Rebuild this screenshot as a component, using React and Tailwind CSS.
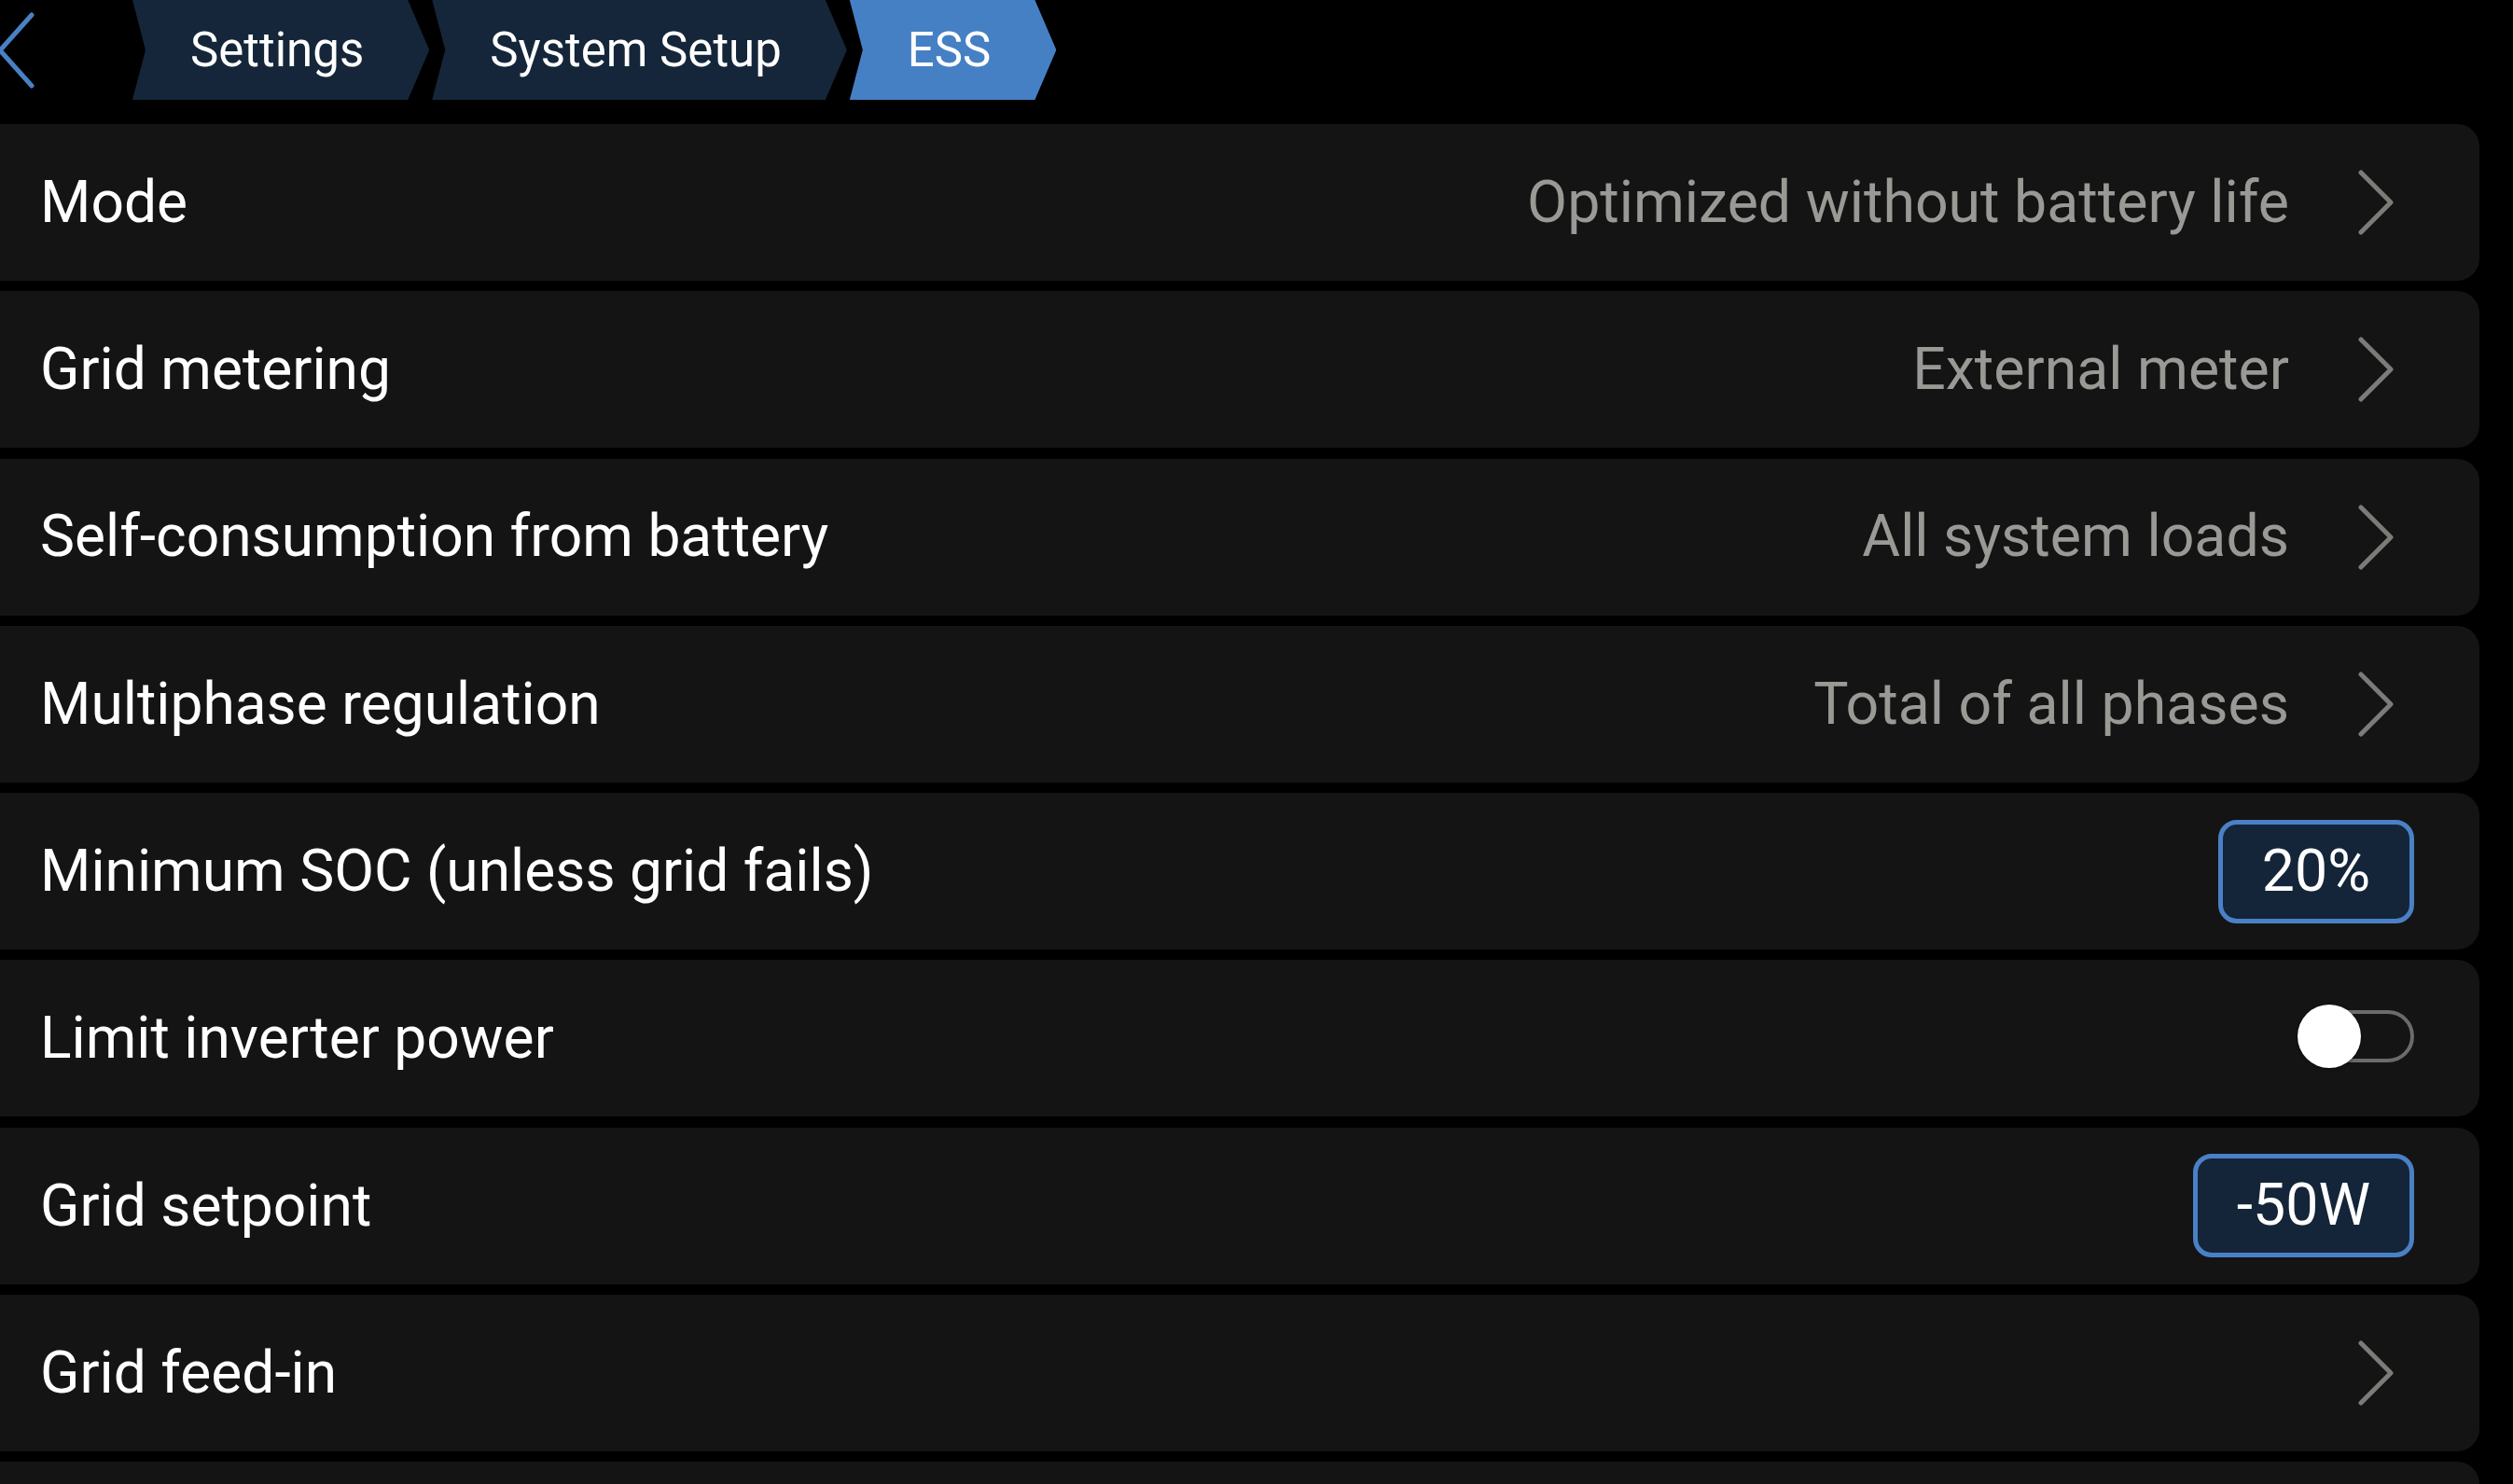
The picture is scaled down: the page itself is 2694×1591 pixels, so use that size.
import React, { useState } from "react";

const crumbs = [
  { name: "Settings", active: false },
  { name: "System Setup", active: false },
  { name: "ESS", active: true },
];

const rows = [
  { label: "Mode", value: "Optimized without battery life", kind: "link" },
  { label: "Grid metering", value: "External meter", kind: "link" },
  { label: "Self-consumption from battery", value: "All system loads", kind: "link" },
  { label: "Multiphase regulation", value: "Total of all phases", kind: "link" },
  { label: "Minimum SOC (unless grid fails)", value: "20%", kind: "box" },
  { label: "Limit inverter power", kind: "switch" },
  { label: "Grid setpoint", value: "-50W", kind: "box" },
  { label: "Grid feed-in", kind: "link" },
  { label: "", kind: "empty" },
];

const Chevron = () => (
  <svg width="38" height="70" viewBox="0 0 38 70" className="ml-[74px] mr-[22px] shrink-0">
    <polyline
      points="3,3 35,35 3,67"
      fill="none"
      stroke="#7b7b78"
      strokeWidth="5"
      strokeLinecap="round"
      strokeLinejoin="round"
    />
  </svg>
);

const Switch = () => {
  const [on, setOn] = useState(false);
  return (
    <button onClick={() => setOn(!on)} className="relative w-[125px] h-[68px] shrink-0 cursor-pointer mb-[5px]">
      <span
        className={
          "absolute right-0 top-[6px] w-[112px] h-[56px] rounded-full border-[4px] " +
          (on ? "border-[#4680c4] bg-[#4680c4]" : "border-[#6b6b69]")
        }
      />
      <span
        className={
          "absolute top-0 w-[68px] h-[68px] rounded-full bg-white shadow-[0_1px_3px_rgba(0,0,0,0.6)] " +
          (on ? "right-0" : "left-0")
        }
      />
    </button>
  );
};

const Row = ({ row }) => (
  <div className="h-[168px] shrink-0 bg-[#141414] rounded-r-[24px] flex items-center pl-[43px] pr-[70px]">
    <span className="flex-1 text-white text-[62.3px] leading-none whitespace-nowrap">{row.label}</span>
    {row.value && row.kind === "link" && (
      <span className="text-[#999995] text-[62.6px] leading-none whitespace-nowrap">{row.value}</span>
    )}
    {row.kind === "link" && <Chevron />}
    {row.kind === "box" && (
      <span className="h-[111px] px-[42px] flex items-center rounded-[20px] border-[5px] border-[#4a80c6] bg-[#142539] text-white text-[62.6px] leading-none">
        {row.value}
      </span>
    )}
    {row.kind === "switch" && <Switch />}
  </div>
);

const App = () => {
  return (
    <div className="w-screen h-screen overflow-hidden bg-black font-['Roboto',sans-serif] flex flex-col">
      <div className="h-[107px] shrink-0 flex items-center">
        <svg width="44" height="84" viewBox="0 0 44 84" className="ml-[-4px] shrink-0">
          <polyline
            points="38,4 4,42 38,80"
            fill="none"
            stroke="#4a80c4"
            strokeWidth="5"
            strokeLinecap="round"
            strokeLinejoin="round"
          />
        </svg>
        <div className="ml-[102px] h-full flex gap-[3px]">
          {crumbs.map((c) => (
            <div
              key={c.name}
              className={
                "h-full flex items-center pl-[62px] pr-[70px] text-white text-[51px] leading-none whitespace-nowrap [clip-path:polygon(0_0,calc(100%_-_23px)_0,100%_50%,calc(100%_-_23px)_100%,0_100%,14px_50%)] " +
                (c.active ? "bg-[#4680c4]" : "bg-[#15263a]")
              }
            >
              {c.name}
            </div>
          ))}
        </div>
      </div>
      <div className="mt-[26px] mr-[36px] flex flex-col gap-[11.3px]">
        {rows.map((row, i) => (
          <Row key={i} row={row} />
        ))}
      </div>
    </div>
  );
};

export default App;
